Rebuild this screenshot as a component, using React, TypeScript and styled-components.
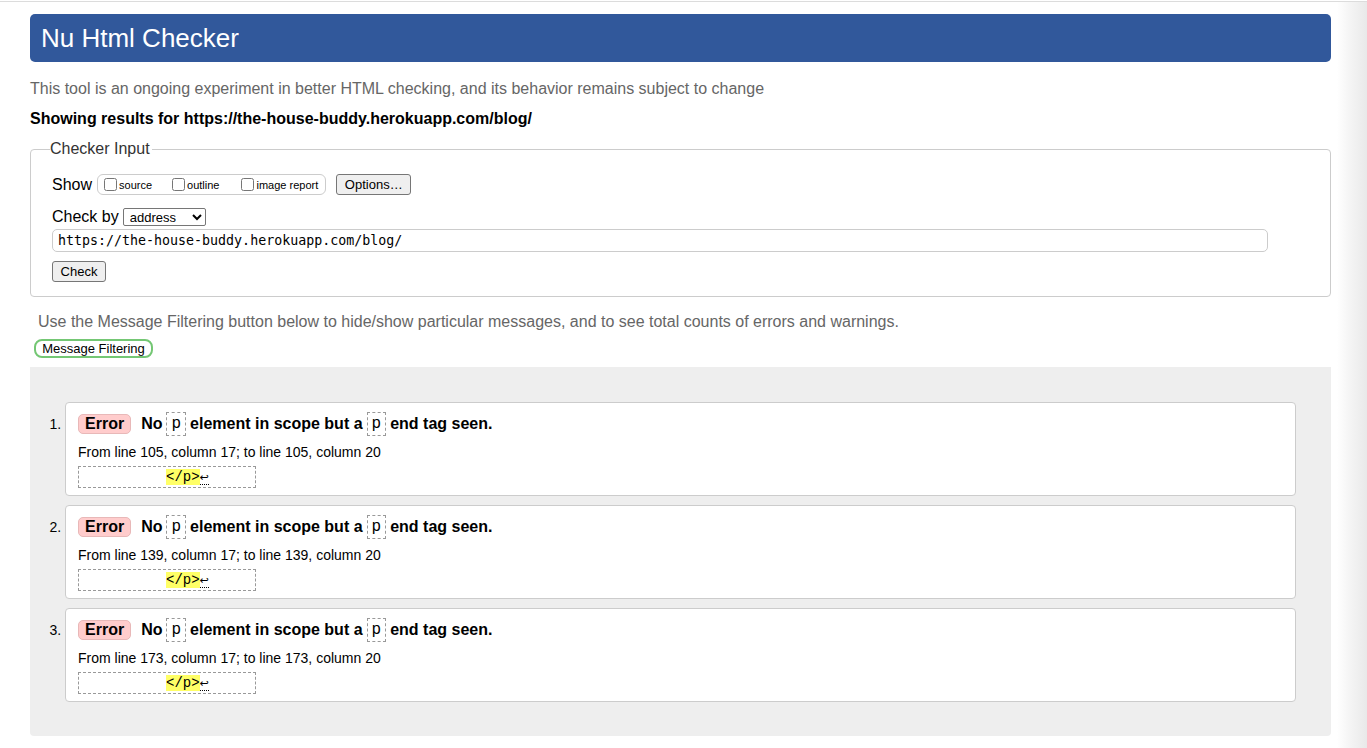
import React from "react";
import styled, {createGlobalStyle} from "styled-components";

const GlobalStyle = createGlobalStyle`
    html, body {
        margin: 0;
        padding: 0;
        background: #fff;
    }
    body {
        font-family: "Liberation Sans", Arial, sans-serif;
        color: #000;
    }
`;

const StyledPage = styled.div`
    display: flex;
    min-height: 748px;
    border-top: 1px solid #dcdcdc;
    margin-top: 1px;
    box-sizing: border-box;
`;

const StyledMain = styled.div`
    flex: 0 0 1337px;
    padding: 12px 6px 10px 30px;
    box-sizing: border-box;
`;

const StyledShade = styled.div`
    flex: 1;
    background: linear-gradient(to right, #fff 0%, #f4f4f4 45%, #e9e9e9 100%);
`;

const StyledHeader = styled.h1`
    margin: 0;
    height: 48px;
    display: flex;
    align-items: center;
    padding-left: 11px;
    background: #31589b;
    border-radius: 5px;
    color: #fff;
    font-size: 26px;
    font-weight: normal;
`;

const StyledIntro = styled.p`
    margin: 18px 0 0;
    color: #666;
    font-size: 16px;
    line-height: 18px;
`;

const StyledResultsFor = styled.p`
    margin: 12px 0 0;
    font-size: 16px;
    font-weight: bold;
    line-height: 18px;
`;

const StyledFieldset = styled.fieldset`
    margin: 12px 0 0;
    padding: 16px 21px 14px;
    border: 1px solid #ccc;
    border-radius: 4px;
    height: 157px;
    box-sizing: border-box;
`;

const StyledLegend = styled.legend`
    margin-left: -2px;
    padding: 0 2px 0 0;
    font-size: 16px;
    color: #333;
`;

const StyledRow = styled.div<{ $top?: number }>`
    display: flex;
    align-items: center;
    gap: 4px;
    font-size: 16px;
    margin-top: ${p => p.$top ?? 0}px;
`;

const StyledCheckGroup = styled.div`
    display: flex;
    align-items: center;
    height: 19px;
    padding: 0 7px 0 6px;
    border: 1px solid #ccc;
    border-radius: 6px;
    margin: 0 6px 0 1px;
`;

const StyledCheckLabel = styled.label<{ $after: number }>`
    display: flex;
    align-items: center;
    font-size: 11px;
    margin-right: ${p => p.$after}px;

    input {
        margin: 0 2px 0 0;
        width: 13px;
        height: 13px;
    }
`;

const StyledButton = styled.button<{ $w: number }>`
    width: ${p => p.$w}px;
    height: 21px;
    padding: 0;
    font-family: "Liberation Sans", Arial, sans-serif;
    font-size: 13px;
    color: #000;
    background: #efefef;
    border: 1px solid #767676;
    border-radius: 3px;
`;

const StyledSelect = styled.select`
    width: 83px;
    height: 18px;
    padding: 0 0 0 2px;
    font-family: "Liberation Sans", Arial, sans-serif;
    font-size: 13px;
    color: #000;
    background: #fff;
    border: 1px solid #767676;
    border-radius: 2px;
`;

const StyledUrl = styled.input`
    display: block;
    width: 1216px;
    height: 23px;
    margin: 3px 0 9px;
    padding: 0 5px;
    box-sizing: border-box;
    font-family: "DejaVu Sans Mono", "Liberation Mono", monospace;
    font-size: 13.3px;
    color: #000;
    border: 1px solid #ccc;
    border-radius: 5px;
`;

const StyledHint = styled.p`
    margin: 16px 0 0 8px;
    color: #666;
    font-size: 16px;
    line-height: 18px;
`;

const StyledFilterButton = styled.button`
    display: block;
    margin: 8px 0 0 4px;
    width: 119px;
    height: 19px;
    padding: 0;
    font-family: "Liberation Sans", Arial, sans-serif;
    font-size: 13px;
    color: #000;
    background: #fff;
    border: 2px solid #74c774;
    border-radius: 8px;
`;

const StyledResults = styled.ol`
    margin: 9px 0 0;
    padding: 35px 35px 34px;
    background: #eee;
    border-radius: 0 0 4px 4px;
    list-style: decimal;
    font-size: 14px;
`;

const StyledMessage = styled.li`
    height: 94px;
    box-sizing: border-box;
    padding: 10px 12px;
    margin-bottom: 9px;
    background: #fff;
    border: 1px solid #ccc;
    border-radius: 4px;

    &:last-child {
        margin-bottom: 0;
    }

    &::marker {
        font-size: 14px;
    }
`;

const StyledMessageTitle = styled.p`
    display: flex;
    align-items: center;
    margin: 0;
    font-size: 16px;
    font-weight: bold;
    height: 22px;
`;

const StyledBadge = styled.span`
    display: inline-block;
    padding: 1px 6px;
    margin-right: 10px;
    background: #fcc;
    border: 1px solid #e8b8b8;
    border-radius: 5px;
    line-height: 16px;
`;

const StyledCode = styled.code`
    display: inline-block;
    margin: 0 4px;
    padding: 2px 4px;
    border: 1px dashed #999;
    font-family: "Liberation Mono", "Courier New", monospace;
    font-size: 16px;
    font-weight: normal;
    line-height: 18px;
`;

const StyledLocation = styled.p`
    margin: 9px 0 0;
    font-size: 14px;
    line-height: 16px;
`;

const StyledExtract = styled.p`
    width: 178px;
    height: 22px;
    box-sizing: border-box;
    margin: 6px 0 0;
    padding: 2px 0 0 87px;
    border: 1px dashed #999;
    font-family: "Liberation Mono", "Courier New", monospace;
    font-size: 14px;
    line-height: 16px;
`;

const StyledMark = styled.b`
    background: #ff6;
    font-weight: normal;
`;

const StyledLf = styled.span`
    border-bottom: 1px dotted #000;
    font-size: 11px;
    font-family: "DejaVu Sans", sans-serif;
`;

const messages = [
    {id: 1, line: 105},
    {id: 2, line: 139},
    {id: 3, line: 173},
];

const App = () => {
    return (
        <StyledPage>
            <GlobalStyle />
            <StyledMain>
                <StyledHeader>Nu Html Checker</StyledHeader>
                <StyledIntro>
                    This tool is an ongoing experiment in better HTML checking, and its behavior remains subject to change
                </StyledIntro>
                <StyledResultsFor>Showing results for https://the-house-buddy.herokuapp.com/blog/</StyledResultsFor>
                <StyledFieldset>
                    <StyledLegend>Checker Input</StyledLegend>
                    <StyledRow>
                        <span>Show</span>
                        <StyledCheckGroup>
                            <StyledCheckLabel $after={20}><input type="checkbox" />source</StyledCheckLabel>
                            <StyledCheckLabel $after={22}><input type="checkbox" />outline</StyledCheckLabel>
                            <StyledCheckLabel $after={0}><input type="checkbox" />image report</StyledCheckLabel>
                        </StyledCheckGroup>
                        <StyledButton $w={75}>Options…</StyledButton>
                    </StyledRow>
                    <StyledRow $top={13}>
                        <span>Check by</span>
                        <StyledSelect defaultValue="address">
                            <option value="address">address</option>
                            <option value="file">file upload</option>
                            <option value="text">text input</option>
                        </StyledSelect>
                    </StyledRow>
                    <StyledUrl defaultValue="https://the-house-buddy.herokuapp.com/blog/" />
                    <StyledButton $w={54}>Check</StyledButton>
                </StyledFieldset>
                <StyledHint>
                    Use the Message Filtering button below to hide/show particular messages, and to see total counts of errors and warnings.
                </StyledHint>
                <StyledFilterButton>Message Filtering</StyledFilterButton>
                <StyledResults>
                    {messages.map(item =>
                        <StyledMessage key={item.id}>
                            <StyledMessageTitle>
                                <StyledBadge>Error</StyledBadge>
                                No<StyledCode>p</StyledCode>element in scope but a<StyledCode>p</StyledCode>end tag seen.
                            </StyledMessageTitle>
                            <StyledLocation>
                                {`From line ${item.line}, column 17; to line ${item.line}, column 20`}
                            </StyledLocation>
                            <StyledExtract>
                                <StyledMark>&lt;/p&gt;</StyledMark><StyledLf>↩</StyledLf>
                            </StyledExtract>
                        </StyledMessage>
                    )}
                </StyledResults>
            </StyledMain>
            <StyledShade />
        </StyledPage>
    )
}

export default App;
